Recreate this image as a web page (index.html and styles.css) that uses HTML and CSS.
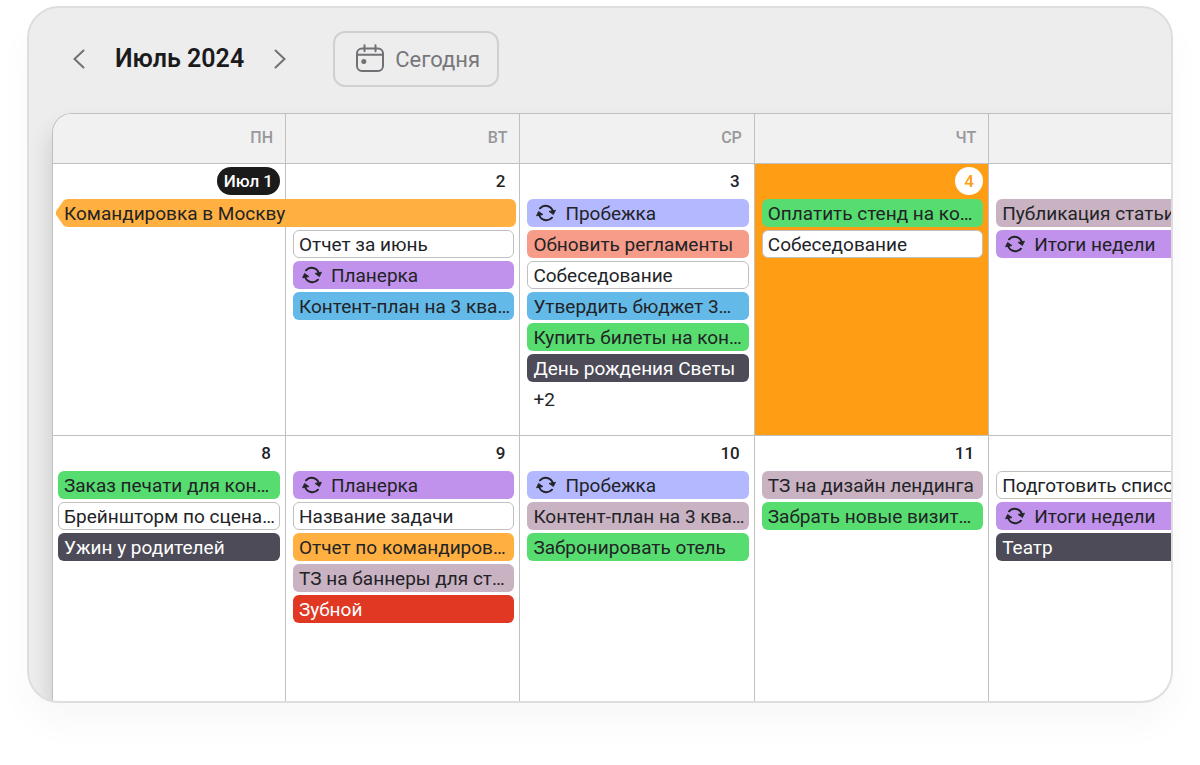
FILE: index.html
```html
<!DOCTYPE html>
<html lang="ru">
<head>
<meta charset="utf-8">
<meta name="viewport" content="width=device-width, initial-scale=1">
<title>Календарь — Июль 2024</title>
<link rel="stylesheet" href="styles.css">
</head>
<body>
<svg class="sprite" aria-hidden="true">
  <symbol id="repeat" viewBox="0 0 20 18">
    <g fill="none" stroke="currentColor" stroke-width="2" stroke-linecap="round">
      <path d="M4 4.300A7.500 7.500 0 0 1 16.800 7"/>
      <path d="M16 13.700A7.500 7.500 0 0 1 3.200 11"/>
    </g>
    <path fill="currentColor" stroke="currentColor" stroke-width=".8" stroke-linejoin="round" d="M13 7.400 19.500 6.200 17.400 10.600zM7 10.600.500 11.800 2.600 7.400z"/>
  </symbol>
</svg>
<main class="card">
  <header class="toolbar">
    <div class="month">
      <button class="arrow" type="button" aria-label="Предыдущий месяц">
        <svg width="12" height="20" viewBox="0 0 12 20"><path d="M10.500 1.500 1.500 10l9 8.500"/></svg>
      </button>
      <h1 class="title">Июль 2024</h1>
      <button class="arrow" type="button" aria-label="Следующий месяц">
        <svg width="12" height="20" viewBox="0 0 12 20"><path d="M1.500 1.500 10.500 10l-9 8.500"/></svg>
      </button>
    </div>
    <button class="today" type="button">
      <svg width="30" height="30" viewBox="0 0 30 30"><rect x="2" y="4.500" width="26" height="22.500" rx="5"/><path d="M2 10.800h26M9.500 1.200v6M20.500 1.200v6"/><circle cx="8.800" cy="17.500" r="2.500"/></svg>
      Сегодня
    </button>
  </header>
  <table class="calendar">
    <colgroup><col class="first"><col span="4"></colgroup>
    <thead>
      <tr><th scope="col">ПН</th><th scope="col">ВТ</th><th scope="col">СР</th><th scope="col">ЧТ</th><th scope="col" aria-label="Пятница"></th></tr>
    </thead>
    <tbody>
      <tr>
        <td>
          <div class="day"><span class="pill">Июл 1</span></div>
          <ul class="events"><li class="event orange span">Командировка в Москву</li></ul>
        </td>
        <td>
          <div class="day">2</div>
          <ul class="events offset">
            <li class="event plain">Отчет за июнь</li>
            <li class="event purple"><svg class="repeat"><use href="#repeat"/></svg>Планерка</li>
            <li class="event blue">Контент-план на 3 ква…</li>
          </ul>
        </td>
        <td>
          <div class="day">3</div>
          <ul class="events">
            <li class="event lilac"><svg class="repeat"><use href="#repeat"/></svg>Пробежка</li>
            <li class="event coral">Обновить регламенты</li>
            <li class="event plain">Собеседование</li>
            <li class="event blue">Утвердить бюджет 3…</li>
            <li class="event green">Купить билеты на кон…</li>
            <li class="event dark">День рождения Светы</li>
          </ul>
          <button class="more" type="button">+2</button>
        </td>
        <td class="current">
          <div class="day"><span class="pill">4</span></div>
          <ul class="events">
            <li class="event green">Оплатить стенд на ко…</li>
            <li class="event plain">Собеседование</li>
          </ul>
        </td>
        <td>
          <div class="day"></div>
          <ul class="events">
            <li class="event mauve">Публикация статьи</li>
            <li class="event purple"><svg class="repeat"><use href="#repeat"/></svg>Итоги недели</li>
          </ul>
        </td>
      </tr>
      <tr>
        <td>
          <div class="day">8</div>
          <ul class="events">
            <li class="event green">Заказ печати для кон…</li>
            <li class="event plain">Брейншторм по сцена…</li>
            <li class="event dark">Ужин у родителей</li>
          </ul>
        </td>
        <td>
          <div class="day">9</div>
          <ul class="events">
            <li class="event purple"><svg class="repeat"><use href="#repeat"/></svg>Планерка</li>
            <li class="event plain">Название задачи</li>
            <li class="event orange">Отчет по командиров…</li>
            <li class="event mauve">ТЗ на баннеры для ст…</li>
            <li class="event red">Зубной</li>
          </ul>
        </td>
        <td>
          <div class="day">10</div>
          <ul class="events">
            <li class="event lilac"><svg class="repeat"><use href="#repeat"/></svg>Пробежка</li>
            <li class="event mauve">Контент-план на 3 ква…</li>
            <li class="event green">Забронировать отель</li>
          </ul>
        </td>
        <td>
          <div class="day">11</div>
          <ul class="events">
            <li class="event mauve">ТЗ на дизайн лендинга</li>
            <li class="event green">Забрать новые визит…</li>
          </ul>
        </td>
        <td>
          <div class="day"></div>
          <ul class="events">
            <li class="event plain">Подготовить списо</li>
            <li class="event purple"><svg class="repeat"><use href="#repeat"/></svg>Итоги недели</li>
            <li class="event dark">Театр</li>
          </ul>
        </td>
      </tr>
    </tbody>
  </table>
</main>
</body>
</html>
```
FILE: styles.css
```css
* { box-sizing: border-box; }

body {
  margin: 0;
  padding: 6px 27px 62px;
  background: #fff;
  color: #222326;
  font-family: Roboto, "Liberation Sans", sans-serif;
  font-size: 19px;
}

button {
  margin: 0;
  padding: 0;
  border: 0;
  background: none;
  color: inherit;
  font: inherit;
  cursor: pointer;
}

.sprite { display: none; }

.card {
  overflow: hidden;
  padding: 23px 0 0 23px;
  border: 2px solid #dedede;
  border-radius: 32px;
  background: #ededed;
  box-shadow: 0 20px 36px rgba(0, 0, 0, 0.03);
}

.toolbar {
  display: flex;
  align-items: center;
  gap: 47px;
  padding: 0 21px 26px;
}

.month {
  display: flex;
  align-items: center;
  gap: 30px;
}

.title {
  margin: 0;
  color: #1b1b1e;
  font-size: 25px;
  font-weight: 600;
  line-height: 32px;
}

.arrow { display: flex; }

.arrow svg,
.today svg {
  fill: none;
  stroke: #707075;
  stroke-width: 2;
  stroke-linecap: round;
}

.today {
  display: flex;
  align-items: center;
  gap: 10px;
  height: 56px;
  padding: 0 17px 0 20px;
  border: 2px solid #d0d0d0;
  border-radius: 12px;
  color: #77777b;
  font-size: 22px;
}

.today circle { fill: #707075; stroke: none; }

.calendar {
  width: 104.7%;
  table-layout: fixed;
  border-collapse: separate;
  border-spacing: 0;
  border: solid #c0c0c0;
  border-width: 1px 0 0 1px;
  border-radius: 20px 0 0 0;
  background: #fff;
  box-shadow: 0 16px 24px rgba(0, 0, 0, 0.16);
}

.first { width: 233px; }

th {
  height: 50px;
  padding: 0 12px 2px 0;
  border: solid #c0c0c0;
  border-width: 0 1px 1px 0;
  background: #f1f1f1;
  color: #98989c;
  font-size: 16px;
  font-weight: 500;
  text-align: right;
}

th:first-child { border-top-left-radius: 19px; }

td {
  height: 272px;
  padding: 3px 5px 0 7px;
  border: solid #c0c0c0;
  border-width: 0 1px 1px 0;
  vertical-align: top;
}

td:first-child { padding-left: 5px; }

tr:last-child td { height: 265px; border-bottom: 0; }

.day {
  height: 28px;
  margin-bottom: 4px;
  padding-right: 9px;
  font-size: 17px;
  font-weight: 500;
  line-height: 28px;
  text-align: right;
}

.pill {
  display: inline-block;
  min-width: 28px;
  margin-right: -9px;
  padding: 0 7px;
  border-radius: 14px;
  background: #1b1b1b;
  color: #fff;
  text-align: center;
}

.current { background: #ff9d14; }

.current .pill { background: #fff; color: #ff9d14; }

.events {
  display: grid;
  gap: 3px;
  margin: 0;
  padding: 0;
  list-style: none;
}

.offset { padding-top: 31px; }

.event {
  display: flex;
  align-items: center;
  height: 28px;
  padding: 0 6px;
  overflow: hidden;
  border-radius: 6px;
  white-space: nowrap;
}

.repeat {
  flex: none;
  width: 20px;
  height: 18px;
  margin: 0 9px 0 3px;
}

.plain {
  padding: 0 5px;
  border: 1px solid #c0c0c0;
  background: #fff;
}

.orange { background: #ffb040; }
.purple { background: #c092eb; }
.blue { background: #63bae8; }
.lilac { background: #b3b8ff; }
.coral { background: #f69c89; }
.green { background: #56dc6f; }
.mauve { background: #c9b2c2; }
.dark { background: #4c4b57; color: #fff; }
.red { background: #e03822; color: #fff; }

/* Two-day event: overflows into the next column */
.span {
  position: relative;
  z-index: 1;
  width: calc(200% + 16px);
  margin-left: -2px;
  padding-left: 8px;
  clip-path: polygon(0 44%, 8px 4%, 12px 0, 100% 0, 100% 100%, 12px 100%, 8px 96%, 0 56%);
}

.more {
  display: block;
  height: 28px;
  margin-top: 3px;
  padding: 0 6px;
}
```
